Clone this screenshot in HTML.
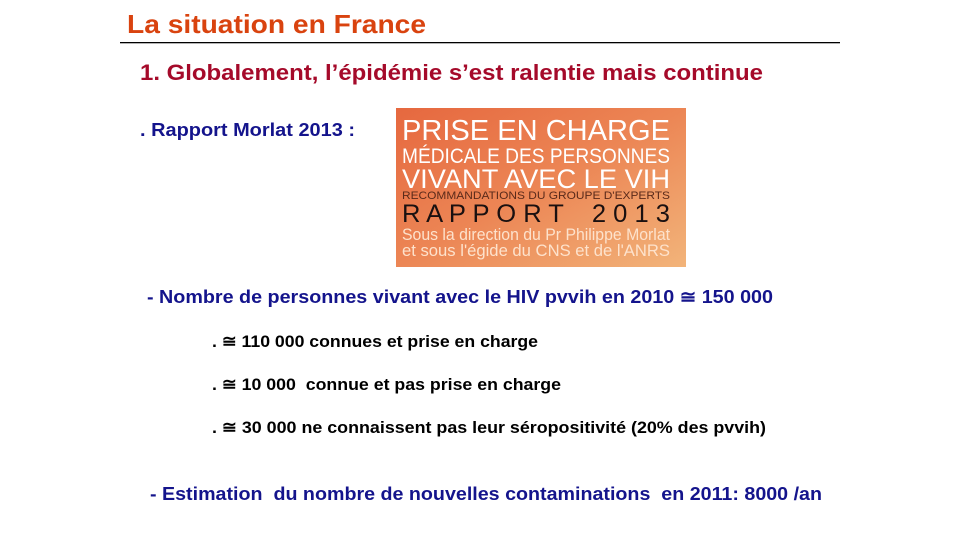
<!DOCTYPE html>
<html><head><meta charset="utf-8"><style>
html,body{margin:0;padding:0;background:#fff;width:960px;height:540px;overflow:hidden}
svg{display:block}
text{font-family:"Liberation Sans",sans-serif;font-weight:bold;white-space:pre}
text.n{font-weight:normal}
</style></head><body>
<svg width="960" height="540" viewBox="0 0 960 540">
<defs>
<linearGradient id="g" x1="0" y1="0" x2="1" y2="1">
<stop offset="0" stop-color="#e6683f"/>
<stop offset="0.5" stop-color="#ec8655"/>
<stop offset="1" stop-color="#f2b47a"/>
</linearGradient>
</defs>
<text x="127" y="33" font-size="26" fill="#d9430f" textLength="299" lengthAdjust="spacingAndGlyphs">La situation en France</text>
<rect x="120" y="42" width="720" height="1.3" fill="#000"/>
<text x="140" y="80" font-size="22" fill="#a50a2a" textLength="623" lengthAdjust="spacingAndGlyphs">1. Globalement, l’épidémie s’est ralentie mais continue</text>
<text x="140" y="136" font-size="18" fill="#14148c" textLength="215" lengthAdjust="spacingAndGlyphs">. Rapport Morlat 2013 :</text>
<rect x="396" y="108" width="290" height="159" fill="url(#g)"/>
<text class="n" x="402" y="140" font-size="29" fill="#fff" textLength="268" lengthAdjust="spacingAndGlyphs">PRISE EN CHARGE</text>
<text class="n" x="402" y="163" font-size="21" fill="#fff" textLength="268" lengthAdjust="spacingAndGlyphs">MÉDICALE DES PERSONNES</text>
<text class="n" x="402" y="188" font-size="27" fill="#fff" textLength="268" lengthAdjust="spacingAndGlyphs">VIVANT AVEC LE VIH</text>
<text class="n" x="402" y="199" font-size="11" fill="#5a2a1a" textLength="268" lengthAdjust="spacingAndGlyphs">RECOMMANDATIONS DU GROUPE D'EXPERTS</text>
<text class="n" x="402" y="222" font-size="25" fill="#1a1010" textLength="268" lengthAdjust="spacingAndGlyphs">R A P P O R T    2 0 1 3</text>
<text class="n" x="402" y="240" font-size="17" fill="#fde2cc" textLength="268" lengthAdjust="spacingAndGlyphs">Sous la direction du Pr Philippe Morlat</text>
<text class="n" x="402" y="256" font-size="17" fill="#fde2cc" textLength="268" lengthAdjust="spacingAndGlyphs">et sous l'égide du CNS et de l'ANRS</text>
<text x="147" y="303" font-size="18" fill="#14148c" textLength="626" lengthAdjust="spacingAndGlyphs">- Nombre de personnes vivant avec le HIV pvvih en 2010 ≅ 150 000</text>
<text x="212" y="347" font-size="17" fill="#000" textLength="326" lengthAdjust="spacingAndGlyphs">. ≅ 110 000 connues et prise en charge</text>
<text x="212" y="390" font-size="17" fill="#000" textLength="349" lengthAdjust="spacingAndGlyphs">. ≅ 10 000  connue et pas prise en charge</text>
<text x="212" y="433" font-size="17" fill="#000" textLength="554" lengthAdjust="spacingAndGlyphs">. ≅ 30 000 ne connaissent pas leur séropositivité (20% des pvvih)</text>
<text x="150" y="500" font-size="18" fill="#14148c" textLength="672" lengthAdjust="spacingAndGlyphs">- Estimation  du nombre de nouvelles contaminations  en 2011: 8000 /an</text>
</svg>
</body></html>
